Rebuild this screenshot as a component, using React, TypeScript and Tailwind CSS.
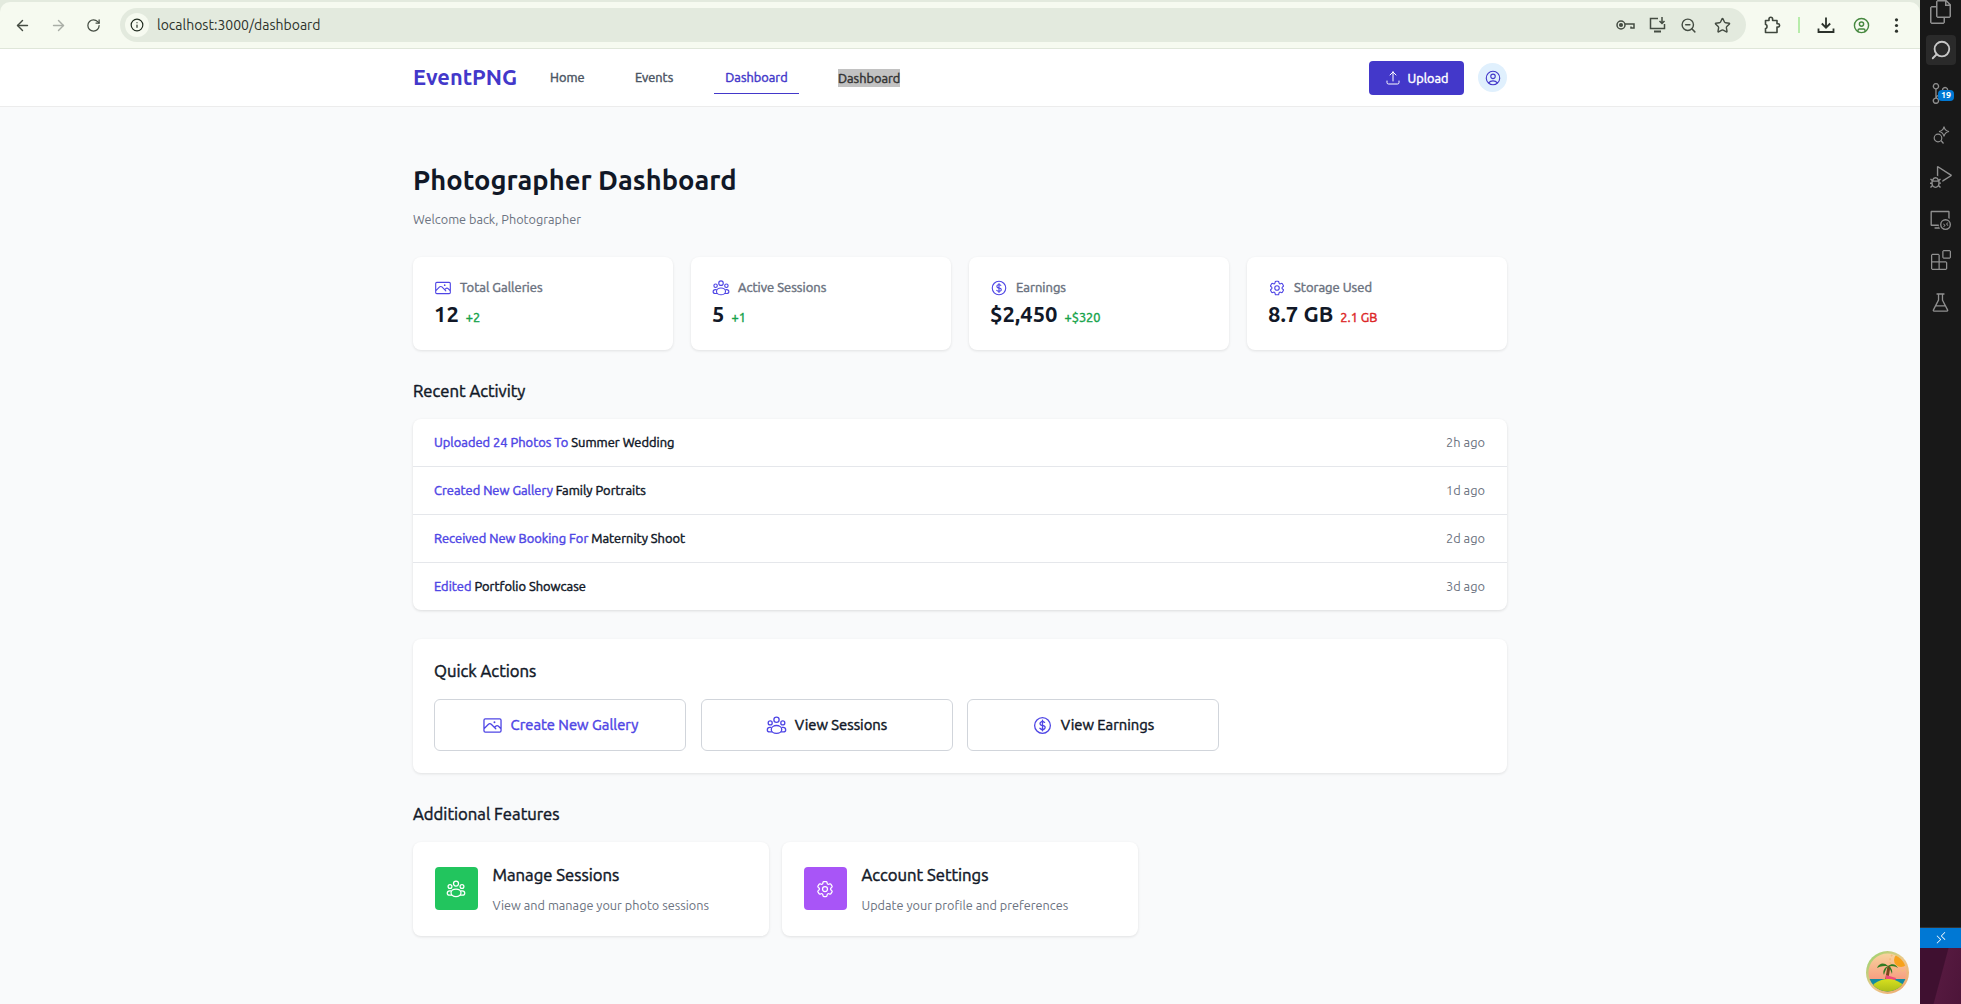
import React from "react";
import { ArrowLeft, ArrowRight, RotateCw, Info, ZoomOut, Star, Search, CircleUser } from "lucide-react";
import { HiOutlinePhoto, HiOutlineCurrencyDollar, HiOutlineArrowUpTray, HiOutlineUserCircle, HiOutlineCog6Tooth } from "react-icons/hi2";
import { VscFiles, VscSourceControl, VscDebugAlt, VscRemoteExplorer, VscExtensions, VscBeaker, VscRemote } from "react-icons/vsc";

const font = "font-['Ubuntu','Noto_Sans','Liberation_Sans',sans-serif]";

function Group() {
  return (
    <svg width="1em" height="1em" viewBox="0 0 24 24" fill="none" stroke="currentColor" strokeWidth="1.500">
      <circle cx="12" cy="5.500" r="3" />
      <circle cx="4.800" cy="9" r="2.300" />
      <circle cx="19.200" cy="9" r="2.300" />
      <ellipse cx="12" cy="16.500" rx="6" ry="4.500" />
      <path d="M6.200 14.200H4.500C2.800 14.200 1.500 15.500 1.500 17c0 1.300 1.200 2.300 2.800 2.300h2.900M17.800 14.200h1.700c1.700 0 3 1.300 3 2.800 0 1.300-1.200 2.300-2.800 2.300h-2.900" />
    </svg>
  );
}

function Stat({ icon, label, value, delta, red }: { icon: React.ReactNode; label: string; value: string; delta: string; red?: boolean }) {
  return (
    <div className="h-[93px] rounded-lg bg-white pl-[21px] pr-4 pt-[22px] shadow-[0_1px_3px_rgba(0,0,0,0.1)]">
      <div className="flex h-[18px] items-center gap-[8px] text-[13px] text-[#6b7280] [-webkit-text-stroke:0.45px]">
        <span className="text-[18px] text-[#4f46e5] [-webkit-text-stroke:0]">{icon}</span>
        {label}
      </div>
      <div className="mt-[3px] flex items-baseline gap-[7px]">
        <span className="text-[22px] font-bold leading-[28px] text-[#111827]">{value}</span>
        <span className={`text-[12.800px] [-webkit-text-stroke:0.45px] ${red ? "text-[#dc2626]" : "text-[#16a34a]"}`}>{delta}</span>
      </div>
    </div>
  );
}

function Row({ action, target, time, last }: { action: string; target: string; time: string; last?: boolean }) {
  return (
    <div className={`flex items-center justify-between pl-[21px] pr-[22px] text-[12.900px] ${last ? "h-[47px]" : "h-[48px] border-b border-[#e5e7eb]"}`}>
      <div className="[-webkit-text-stroke:0.45px]">
        <span className="text-[#4f46e5]">{action}</span> <span className="text-[#111827]">{target}</span>
      </div>
      <span className="text-[12.800px] text-[#6b7280]">{time}</span>
    </div>
  );
}

function Action({ icon, label, active }: { icon: React.ReactNode; label: string; active?: boolean }) {
  return (
    <button className={`flex h-[52px] w-[252px] items-center justify-center gap-2 rounded-md border border-[#d1d5db] bg-white text-[14.800px] [-webkit-text-stroke:0.45px] ${active ? "text-[#4f46e5]" : "text-[#111827]"}`}>
      <span className="text-[21px] text-[#4f46e5] [-webkit-text-stroke:0]">{icon}</span>
      {label}
    </button>
  );
}

function Feature({ icon, bg, title, desc }: { icon: React.ReactNode; bg: string; title: string; desc: string }) {
  return (
    <div className="flex h-[94px] w-[355.500px] items-center gap-[15px] rounded-lg bg-white pl-[21.500px] shadow-[0_1px_3px_rgba(0,0,0,0.1)]">
      <div className={`-mt-[1px] flex h-[43px] w-[43px] items-center justify-center rounded ${bg} text-[20px] text-white`}>{icon}</div>
      <div className="-mt-[2px]">
        <div className="text-[16.700px] leading-[24px] text-[#111827] [-webkit-text-stroke:0.45px]">{title}</div>
        <div className="mt-[9px] text-[12.700px] leading-[18px] text-[#6b7280]">{desc}</div>
      </div>
    </div>
  );
}

function ChromeBar() {
  const ic = "h-[17px] w-[17px] text-[#444c42]";
  return (
    <div className="bg-[#e3eade] pt-[2px]">
      <div className="flex h-[47px] items-center rounded-t-[10px] border-b border-[#dfe6d9] bg-[#f6faf0] pl-[14px] pr-[15px]">
        <ArrowLeft className={ic} />
        <ArrowRight className="ml-[19px] h-[17px] w-[17px] text-[#a9aea6]" />
        <RotateCw className="ml-[19px] h-[15px] w-[15px] text-[#444c42]" />
        <div className="ml-[19px] flex h-[34px] flex-1 items-center rounded-full bg-[#e3eade] pl-[5px] pr-[15px]">
          <div className="flex h-[24px] w-[24px] items-center justify-center rounded-full bg-[#f6faf0]">
            <Info className="h-[14px] w-[14px] text-[#1f2a1e]" />
          </div>
          <span className="ml-[8px] flex-1 text-[14px] text-[#2c322b]">localhost:3000/dashboard</span>
          <div className="flex items-center gap-[14px]">
            <svg width="19" height="12" viewBox="0 0 19 12" fill="none" stroke="#444c42" strokeWidth="1.500"><circle cx="5" cy="6" r="4" /><circle cx="5" cy="6" r="1.300" fill="#444c42" /><path d="M9 5h9v4h-3V7.500" /></svg>
            <svg width="17" height="16" viewBox="0 0 17 16" fill="none" stroke="#444c42" strokeWidth="1.500"><path d="M9 1.500H1.500v10h14V7" /><path d="M5 14.500h7" strokeWidth="2" /><path d="M13 0v6M10.500 4 13 6.500 15.500 4" /></svg>
            <ZoomOut className={ic} />
            <Star className={`${ic} ml-[3px]`} />
          </div>
        </div>
        <svg className="ml-[17px]" width="18" height="18" viewBox="0 0 18 18" fill="none" stroke="#3f473d" strokeWidth="1.600" strokeLinejoin="round">
          <path d="M2.500 4.500h3.500V3a1.800 1.800 0 0 1 3.600 0v1.500h4.400v3.300h1a1.600 1.600 0 0 1 0 3.200h-1v5.500H2.500V12.500c1.300 0 1.500-.7 1.500-2s-.2-2-1.500-2Z" />
        </svg>
        <div className="ml-[17px] h-[16px] w-[2px] bg-[#b7ecaa]" />
        <svg className="ml-[17px]" width="18" height="18" viewBox="0 0 18 18" fill="none" stroke="#2c322b" strokeWidth="1.800">
          <path d="M9 1.500v10M4.800 7.500 9 11.700l4.200-4.200M1.500 12.500v3.500h15v-3.500" />
        </svg>
        <CircleUser className="ml-[18px] h-[17px] w-[17px] text-[#46883f]" />
        <svg className="ml-[18px]" width="17" height="17" viewBox="0 0 17 17" fill="#2c322b"><circle cx="8.500" cy="2.800" r="1.600" /><circle cx="8.500" cy="8.500" r="1.600" /><circle cx="8.500" cy="14.200" r="1.600" /></svg>
      </div>
    </div>
  );
}

function Nav() {
  return (
    <div className="flex h-[58px] justify-center border-b border-[#ececec] bg-white">
      <div className="flex w-[1094px] items-center">
        <span className="w-[137px] text-[21.800px] font-bold text-[#4338ca]">EventPNG</span>
        <div className="flex items-center text-[12.800px] text-[#4b5563] [-webkit-text-stroke:0.45px]">
          <span className="w-[85px]">Home</span>
          <span className="w-[79px]">Events</span>
          <span className="mr-[39px] flex h-[33px] w-[85px] items-center justify-center border-b border-[#4338ca] pt-[2px] text-[#4338ca]">Dashboard</span>
          <span className="bg-[#c2c2c2] leading-[18px] text-[#333]">Dashboard</span>
        </div>
        <div className="flex-1" />
        <button className="flex h-[34px] w-[95px] items-center justify-center gap-[7px] rounded bg-[#4338ca] pt-[2px] text-[12.700px] text-white [-webkit-text-stroke:0.45px]">
          <HiOutlineArrowUpTray className="-mt-[2px] text-[16px] [-webkit-text-stroke:0]" />
          Upload
        </button>
        <div className="ml-[14px] flex h-[29px] w-[29px] items-center justify-center rounded-full bg-[#e0f0fd] text-[18px] text-[#4338ca]">
          <HiOutlineUserCircle />
        </div>
      </div>
    </div>
  );
}

function Side() {
  const c = "text-[#8f8f8f]";
  return (
    <div className="relative flex w-[41px] flex-col bg-[#181818]">
      <div className="flex h-[24px] items-end justify-center overflow-hidden text-[#8f8f8f]"><VscFiles className="text-[24px]" /></div>
      <div className="mx-auto mt-[11px] flex h-[30px] w-[30px] items-center justify-center rounded bg-[#2a2a2a]">
        <Search className="h-[22px] w-[22px] -scale-x-100 text-[#c8c8c8]" />
      </div>
      <div className="relative mt-[13px] flex h-[30px] items-center justify-center"><VscSourceControl className={`text-[21px] ${c}`} />
        <span className="absolute left-[18px] top-[12px] rounded-[4px] bg-[#0078d4] px-[3px] text-[9px] font-bold leading-[11px] text-white">19</span>
      </div>
      <div className="mt-[12px] flex h-[30px] items-center justify-center">
        <svg width="20" height="20" viewBox="0 0 20 20" fill="none" stroke="#8f8f8f" strokeWidth="1.200"><circle cx="7" cy="13" r="3.800" /><path d="M10 15.500 12.500 18.500M13 1.500c.5 3 2 4.500 5 5-3 .5-4.500 2-5 5-.5-3-2-4.500-5-5 3-.5 4.500-2 5-5Z" /></svg>
      </div>
      <div className="mt-[12px] flex h-[30px] items-center justify-center"><VscDebugAlt className={`text-[22px] ${c}`} /></div>
      <div className="mt-[12px] flex h-[30px] items-center justify-center"><VscRemoteExplorer className={`text-[21px] ${c}`} /></div>
      <div className="mt-[11px] flex h-[30px] items-center justify-center"><VscExtensions className={`text-[20px] ${c}`} /></div>
      <div className="mt-[12px] flex h-[30px] items-center justify-center"><VscBeaker className={`text-[21px] ${c}`} /></div>
      <div className="flex-1" />
      <div className="flex h-[21px] items-center justify-center border-t border-[#333] bg-[#0078d4] text-white"><VscRemote className="text-[14px]" /></div>
      <div className="h-[56px] bg-[linear-gradient(105deg,#3f1030_0%,#3f1030_50%,#55193f_52%,#4d1539_100%)]" />
    </div>
  );
}

function Avatar() {
  return (
    <svg className="absolute left-[1866px] top-[951px]" width="43" height="43" viewBox="0 0 43 43">
      <defs>
        <linearGradient id="sky" x1="0" y1="0" x2="0" y2="1"><stop offset="0" stopColor="#f7d8a0" /><stop offset="0.7" stopColor="#f79b7f" /></linearGradient>
        <linearGradient id="ring" x1="0" y1="0" x2="1" y2="1"><stop offset="0" stopColor="#8fd46a" /><stop offset="0.5" stopColor="#e9c98a" /><stop offset="1" stopColor="#f0a36a" /></linearGradient>
        <linearGradient id="hill" x1="0" y1="0" x2="0" y2="1"><stop offset="0" stopColor="#d8e01e" /><stop offset="1" stopColor="#6f8f10" /></linearGradient>
        <clipPath id="cc"><circle cx="21.500" cy="21.500" r="19" /></clipPath>
      </defs>
      <circle cx="21.500" cy="21.500" r="21.500" fill="url(#ring)" />
      <g clipPath="url(#cc)">
        <rect width="43" height="43" fill="url(#sky)" />
        <circle cx="34" cy="10" r="10" fill="none" stroke="#f5bb78" strokeWidth="1.500" strokeDasharray="2 2" />
        <circle cx="35" cy="9" r="7" fill="#f7a21c" />
        <rect y="28" width="43" height="15" fill="#138ca0" />
        <path d="M20 33 23 15" stroke="#7a4a1c" strokeWidth="3" />
        <path d="M22 15c-4-4-9-3-11 2 4-2 7-2 11-2Zm0 0c-3 1-6 5-4 9 1-4 2-6 4-9Zm0 0c4-3 8-2 10 2-3-2-6-2-10-2Zm0 0c3 1 5 4 4 8-1-3-2-5-4-8Z" fill="#2f7d22" />
        <path d="M20 24l10 3-1 3-9-2Z" fill="#ef4b7b" />
        <ellipse cx="22" cy="43" rx="19" ry="15" fill="url(#hill)" />
      </g>
    </svg>
  );
}

export default function App() {
  return (
    <div className={`relative flex h-[1004px] w-[1961px] overflow-hidden bg-[#f9fafb] ${font}`}>
      <div className="flex w-[1920px] flex-col">
        <ChromeBar />
        <Nav />
        <main className="mx-auto w-[1094px]">
          <h1 className="mt-[52px] text-[27.300px] font-bold leading-[42px] text-[#111827]">Photographer Dashboard</h1>
          <p className="mt-[8px] text-[12.700px] leading-[20px] text-[#6b7280]">Welcome back, Photographer</p>
          <div className="mt-[28px] grid grid-cols-4 gap-[18px]">
            <Stat icon={<HiOutlinePhoto />} label="Total Galleries" value="12" delta="+2" />
            <Stat icon={<Group />} label="Active Sessions" value="5" delta="+1" />
            <Stat icon={<HiOutlineCurrencyDollar />} label="Earnings" value="$2,450" delta="+$320" />
            <Stat icon={<HiOutlineCog6Tooth />} label="Storage Used" value="8.7 GB" delta="2.1 GB" red />
          </div>
          <h2 className="mt-[29px] text-[16.700px] leading-[24px] text-[#111827] [-webkit-text-stroke:0.45px]">Recent Activity</h2>
          <div className="mt-[16px] rounded-lg bg-white shadow-[0_1px_3px_rgba(0,0,0,0.12)]">
            <Row action="Uploaded 24 Photos To" target="Summer Wedding" time="2h ago" />
            <Row action="Created New Gallery" target="Family Portraits" time="1d ago" />
            <Row action="Received New Booking For" target="Maternity Shoot" time="2d ago" />
            <Row action="Edited" target="Portfolio Showcase" time="3d ago" last />
          </div>
          <section className="mt-[29px] h-[134px] rounded-lg bg-white px-[21px] pt-[20px] shadow-[0_1px_3px_rgba(0,0,0,0.1)]">
            <h2 className="text-[16.700px] leading-[24px] text-[#111827] [-webkit-text-stroke:0.45px]">Quick Actions</h2>
            <div className="mt-[16px] flex gap-[14.500px]">
              <Action icon={<HiOutlinePhoto />} label="Create New Gallery" active />
              <Action icon={<Group />} label="View Sessions" />
              <Action icon={<HiOutlineCurrencyDollar />} label="View Earnings" />
            </div>
          </section>
          <h2 className="mt-[29px] text-[16.700px] leading-[24px] text-[#111827] [-webkit-text-stroke:0.45px]">Additional Features</h2>
          <div className="mt-[16px] flex gap-[13.500px]">
            <Feature icon={<Group />} bg="bg-[#22c55e]" title="Manage Sessions" desc="View and manage your photo sessions" />
            <Feature icon={<HiOutlineCog6Tooth />} bg="bg-[#a855f7]" title="Account Settings" desc="Update your profile and preferences" />
          </div>
        </main>
      </div>
      <Side />
      <Avatar />
    </div>
  );
}
